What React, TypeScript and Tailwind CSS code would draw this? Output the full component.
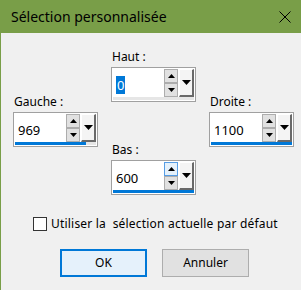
import React from 'react'

const font = {fontFamily: '"Noto Sans", "Open Sans", sans-serif'}

interface SpinProps {
  label: string
  value: string
  fill: number
  selected?: boolean
  hover?: boolean
}

const Spinner: React.FC<SpinProps> = ({label, value, fill, selected, hover}) => {
  return (
    <div className="flex flex-col w-[85px]">
      <div className="h-[16px] leading-[16px] text-[12px] text-black pl-[1px]">{label}</div>
      <div className="mt-[2px] h-[35px] border border-[#a0a0a0] bg-white p-[1px] flex flex-col">
        <div className="flex h-[28px]">
          <div className="flex-1 pl-[3px] pt-[3px]">
            <span className={`inline-block h-[18px] leading-[18px] text-[13px] ${selected ? 'bg-[#0078d7] text-white px-[1px]' : 'text-black'}`}>{value}</span>
          </div>
          <div className="flex flex-col w-[14px]">
            <div className={`h-[14px] flex items-center justify-center border ${hover ? 'border-[#569de5] bg-[#e5f1fb]' : 'border-[#adadad] bg-[#e1e1e1]'}`}>
              <svg width="7" height="4" viewBox="0 0 7 4">
                <path d="M0 4 L3.5 0 L7 4 Z" fill="#000" />
              </svg>
            </div>
            <div className="h-[14px] flex items-center justify-center border border-[#adadad] bg-[#e1e1e1]">
              <svg width="7" height="4" viewBox="0 0 7 4">
                <path d="M0 0 L7 0 L3.5 4 Z" fill="#000" />
              </svg>
            </div>
          </div>
          <div className="ml-[1px] w-[15px] flex items-center justify-center bg-[#f4f4f4] border-l border-t border-l-white border-t-white border-r-2 border-b-2 border-r-[#696969] border-b-[#696969]">
            <svg width="9" height="5" viewBox="0 0 9 5">
              <path d="M0 0 L9 0 L4.5 5 Z" fill="#000" />
            </svg>
          </div>
        </div>
        <div className="h-[3px] bg-[#e6e6e6]">
          <div className="h-full bg-[#0078d7]" style={{width: `${fill}%`}}></div>
        </div>
      </div>
    </div>
  )
}

export default function App() {
  return (
    <div style={font} className="w-[301px] h-[290px] bg-[#f0f0f0] border-l border-[#799e48] flex flex-col overflow-hidden">
      <div className="h-[33px] bg-[#799e48] flex items-center justify-between pl-[10px] pr-[10px]">
        <span className="text-[14px] text-black">Sélection personnalisée</span>
        <svg width="12" height="12" viewBox="0 0 12 12">
          <path d="M0.5 0.5 L11.5 11.5 M11.5 0.5 L0.5 11.5" stroke="#000" strokeWidth="1" />
        </svg>
      </div>

      <div className="flex gap-[13px] pl-[12px]">
        <div className="mt-[61px]">
          <Spinner label="Gauche :" value="969" fill={88} />
        </div>
        <div className="flex flex-col pt-[16px]">
          <Spinner label="Haut :" value="0" fill={0} selected />
          <div className="mt-[40px]">
            <Spinner label="Bas :" value="600" fill={100} hover />
          </div>
        </div>
        <div className="mt-[61px]">
          <Spinner label="Droite :" value="1100" fill={100} />
        </div>
      </div>

      <div className="mt-[21px] h-[16px] flex items-center pl-[32px]">
        <div className="w-[14px] h-[14px] border border-[#333333] bg-white"></div>
        <span className="ml-[4px] text-[12px] tracking-[0.2px] text-black whitespace-pre">Utiliser la  sélection actuelle par défaut</span>
      </div>

      <div className="mt-[17px] flex gap-[15px] pl-[59px]">
        <button className="w-[87px] h-[28px] border-2 border-[#0078d7] bg-[#e5f1fb] text-[12px] text-black">OK</button>
        <button className="w-[87px] h-[28px] border border-[#adadad] bg-[#e1e1e1] text-[12px] text-black">Annuler</button>
      </div>
    </div>
  )
}
